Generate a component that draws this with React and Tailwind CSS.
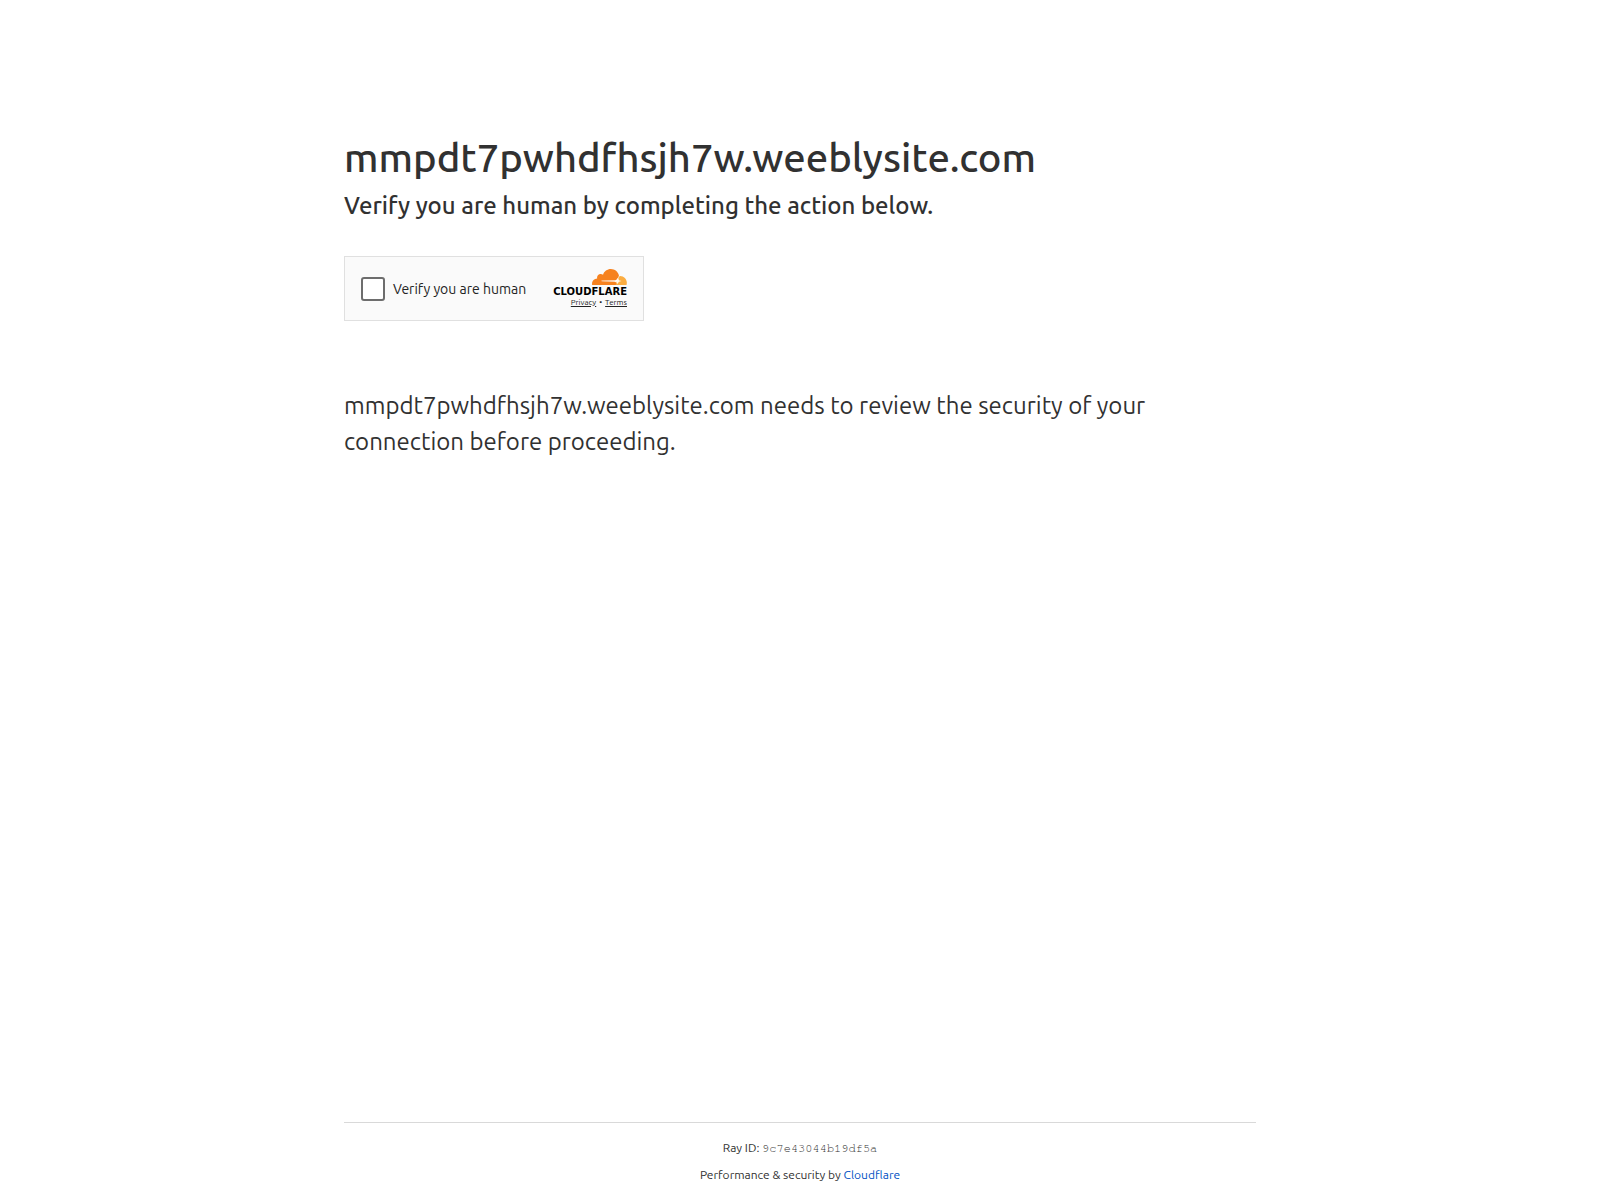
import React from 'react';

const HOST = 'mmpdt7pwhdfhsjh7w.weeblysite.com';
const RAY_ID = '9c7e43044b19df5a';

const CloudIcon = () => (
  <svg className="h-4 w-[35px]" viewBox="0 6.5 24 11" aria-hidden="true">
    <path
      fill="#f6821f"
      d="M16.5088 16.8447c.1475-.5068.0908-.9707-.1553-1.3154-.2246-.3164-.6045-.499-1.0615-.5205l-8.6592-.1123a.1559.1559 0 0 1-.1333-.0713c-.0283-.042-.0351-.0986-.021-.1553.0278-.084.1123-.1484.2036-.1562l8.7359-.1123c1.0351-.0489 2.1601-.8868 2.5537-1.9136l.499-1.3013c.0215-.0561.0293-.1128.0147-.168-.5625-2.5463-2.835-4.4453-5.5499-4.4453-2.5039 0-4.6284 1.6177-5.3876 3.8614-.4927-.3658-1.1187-.5625-1.794-.499-1.2026.119-2.1665 1.083-2.2861 2.2856-.0283.31-.0069.6128.0635.894C1.5683 13.171 0 14.7754 0 16.752c0 .1748.0142.3515.0352.5273.0141.083.0844.1475.1689.1475h17.5z"
    />
    <path
      fill="#fbad41"
      d="M19.2656 11.2813c-.0771 0-.1611 0-.2383.0112l-1.9 3-.9 3.134h7.36c.0771 0 .1474-.0489.169-.126.1122-.4082.1757-.837.1757-1.2803 0-2.6025-2.05-4.739-4.6664-4.739z"
    />
    <path
      fill="#fff"
      fillOpacity="0.9"
      d="M6.5 14.5l9.9-.1 1.5-2 .6 1.8 1.8.5-1.8.5-1.1 1.6-.6-1.7-10.3-.3z"
    />
  </svg>
);

const Turnstile = () => (
  <div className="flex h-[65px] w-[300px] max-w-full items-center justify-between border border-[#e0e0e0] bg-[#fafafa] px-4">
    <label className="flex items-center gap-2 text-sm text-[#232323]">
      <input
        type="checkbox"
        className="size-6 shrink-0 appearance-none rounded-[3px] border-2 border-[#6d6d6d] bg-white"
      />
      Verify you are human
    </label>

    <div className="flex flex-col items-end pb-0.5">
      <CloudIcon />
      <div className="font-['DejaVu_Sans',sans-serif] text-[10px] leading-[14px] font-bold text-black">
        CLOUDFLARE
      </div>
      <div className="flex gap-[3px] text-[8px] leading-[8px] text-[#232323]">
        <a href="#privacy" className="underline">Privacy</a>
        <span>•</span>
        <a href="#terms" className="underline">Terms</a>
      </div>
    </div>
  </div>
);

const App = () => {
  return (
    <div className="flex min-h-screen flex-col bg-white font-[Ubuntu,'Noto_Sans',sans-serif] text-[#313131]">
      <main className="mx-auto w-full max-w-[960px] flex-1 px-6 pt-32">
        <h1 className="text-[40px] leading-[60px] font-medium">{HOST}</h1>
        <h2 className="text-2xl leading-9 font-medium">
          Verify you are human by completing the action below.
        </h2>

        <div className="my-8">
          <Turnstile />
        </div>

        <p className="pt-[35px] text-2xl leading-9">
          {`${HOST} needs to review the security of your connection before proceeding.`}
        </p>
      </main>

      <footer className="mx-auto w-full max-w-[960px] px-6 text-center text-xs leading-[18px]">
        <div className="flex flex-col gap-[9px] border-t border-[#d9d9d9] py-4">
          <div>
            Ray ID:{' '}
            <code className="font-['Nimbus_Mono_PS','Nimbus_Mono_L',FreeMono,'Courier_10_Pitch','Liberation_Mono',monospace]">
              {RAY_ID}
            </code>
          </div>
          <div>
            Performance &amp; security by{' '}
            <a href="https://www.cloudflare.com" className="text-[#0051c3]">Cloudflare</a>
          </div>
        </div>
      </footer>
    </div>
  );
};

export default App;
